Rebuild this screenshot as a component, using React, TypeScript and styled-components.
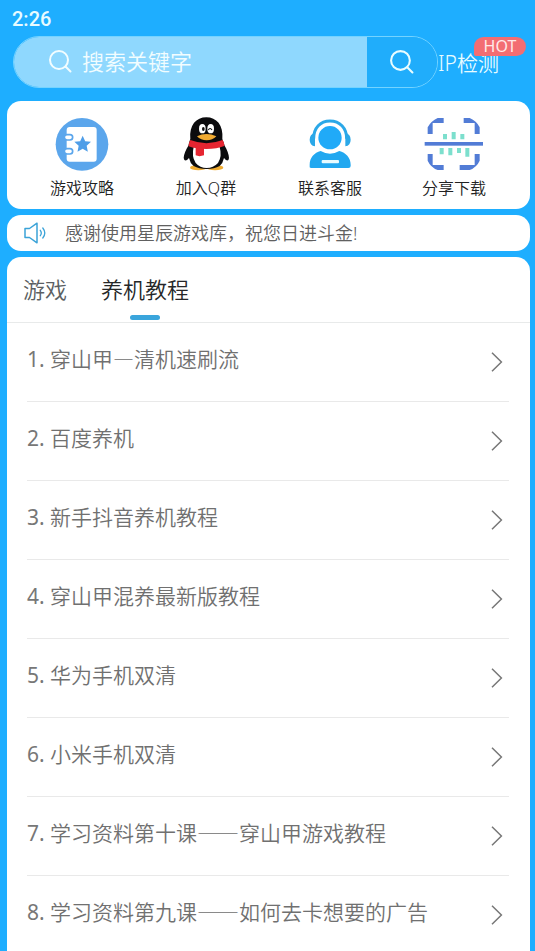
import React, { useState } from 'react';
import styled, { createGlobalStyle } from 'styled-components';

const GlobalStyle = createGlobalStyle`
  * { box-sizing: border-box; }
  body {
    margin: 0;
    background: #1eaeff;
    font-family: "Noto Sans", "Noto Sans CJK SC", sans-serif;
    font-weight: 350;
  }
  button, input { font: inherit; }
  a { color: inherit; text-decoration: none; }
`;

const Page = styled.div`
  display: flex;
  flex-direction: column;
  min-height: 100vh;
`;

const StatusBar = styled.div`
  height: 36px;
  padding: 0 12px;
  font: 500 20px/38px Roboto, sans-serif;
  color: #e8fbff;
`;

const SearchBar = styled.header`
  display: flex;
  height: 52px;
  padding-left: 13px;
`;

const SearchForm = styled.form`
  flex: 1;
  display: flex;
  min-width: 0;
  border: 1px solid #74d3ff;
  border-radius: 26px;
  overflow: hidden;
`;

const SearchField = styled.label`
  flex: 1;
  display: flex;
  align-items: center;
  gap: 10px;
  min-width: 0;
  padding: 0 0 2px 34px;
  background: #8fd8fe;
  color: #f2fdff;
`;

const SearchInput = styled.input`
  flex: 1;
  min-width: 0;
  padding: 0;
  border: 0;
  outline: 0;
  background: transparent;
  font-size: 22px;
  line-height: 32px;
  color: #f2fdff;
  &::placeholder { color: #f2fdff; opacity: 1; }
`;

const SearchButton = styled.button`
  display: flex;
  align-items: center;
  justify-content: center;
  width: 70px;
  padding: 0 2px 2px 0;
  border: 0;
  background: #20adfb;
  color: #e8fcff;
`;

const DetectLink = styled.a`
  position: relative;
  width: 97px;
  font-size: 21px;
  line-height: 54px;
  color: #e8fcff;
  white-space: nowrap;
`;

const HotBadge = styled.span`
  position: absolute;
  top: 1px;
  left: 36px;
  width: 52px;
  border-radius: 10px 10px 10px 2px;
  background: #f36d72;
  font-size: 16px;
  font-weight: 400;
  line-height: 19px;
  text-align: center;
  color: #ffe9e9;
`;

const Main = styled.main`
  flex: 1;
  display: flex;
  flex-direction: column;
  gap: 6px;
  padding: 13px 5px 0 7px;
`;

const Card = styled.section`
  background: #fff;
  border-radius: 14px;
`;

const Shortcuts = styled(Card)`
  display: grid;
  grid-template-columns: repeat(4, 1fr);
  height: 108px;
  padding: 16px 14px 0 13px;
`;

const Shortcut = styled.a`
  display: flex;
  flex-direction: column;
  align-items: center;
  gap: 5px;
  font-size: 16px;
  line-height: 24px;
  color: #222;
`;

const ShortcutIcon = styled.svg`
  width: 60px;
  height: 54px;
`;

const Notice = styled(Card)`
  display: flex;
  align-items: center;
  gap: 18px;
  height: 36px;
  padding: 0 17px;
  font-size: 18px;
  line-height: 36px;
  color: #606060;
`;

const Content = styled(Card)`
  flex: 1;
  border-radius: 14px 14px 0 0;
`;

const Tabs = styled.div`
  display: flex;
  gap: 34px;
  height: 66px;
  padding: 0 16px;
  border-bottom: 1px solid #e8eaea;
`;

const Tab = styled.button<{ $active: boolean }>`
  display: flex;
  flex-direction: column;
  align-items: center;
  gap: 10px;
  padding: 16px 0 0;
  border: 0;
  background: none;
  font-size: 22px;
  line-height: 32px;
  color: ${p => (p.$active ? '#252729' : '#5c5f63')};
  &::after {
    content: "";
    width: 30px;
    height: 5px;
    border-radius: 3px;
    background: ${p => (p.$active ? '#3aa5dc' : 'transparent')};
  }
`;

const List = styled.ol`
  margin: 0;
  padding: 0 21px 0 20px;
  list-style: none;
`;

const Row = styled.li`
  border-bottom: 1px solid #e9e9e9;
  &:last-child { border-bottom: 0; }
`;

const RowLink = styled.a`
  display: flex;
  align-items: center;
  height: 78px;
  padding-right: 6px;
  color: #707070;
`;

const RowNumber = styled.span`
  padding-bottom: 6px;
  font-size: 21px;
  line-height: 32px;
  font-weight: 400;
  white-space: pre;
  color: #777;
`;

const RowTitle = styled.span`
  flex: 1;
  padding-bottom: 8px;
  font-family: "Noto Sans CJK SC", sans-serif;
  font-size: 21px;
  line-height: 32px;
  white-space: nowrap;
`;

const SearchIcon = ({ size }: { size: number }) => (
  <svg width={size} height={size} viewBox="0 0 24 24" fill="none" stroke="currentColor" strokeWidth="2" strokeLinecap="round" aria-hidden="true">
    <circle cx="11" cy="11" r="9" />
    <path d="M17.5 17.5 22.5 22.5" />
  </svg>
);

const Chevron = () => (
  <svg width="12" height="20" viewBox="0 0 12 20" fill="none" stroke="#777" strokeWidth="1.5" aria-hidden="true">
    <path d="M1 .8 10.4 10 1 19.2" />
  </svg>
);

const SpeakerIcon = () => (
  <svg width="23" height="22" viewBox="0 0 23 22" fill="none" stroke="#3ba3d8" strokeWidth="1.5" strokeLinejoin="round" strokeLinecap="round" aria-hidden="true">
    <path d="M1 6.5H5.5L13 1.2V20.8L5.5 15.5H1Z" />
    <path d="M16.3 8.3Q18.3 11 16.3 13.7M18.8 6Q22.8 11 18.8 16" strokeWidth="1.3" />
  </svg>
);

const GuideIcon = () => (
  <ShortcutIcon viewBox="37 36 180 162" aria-hidden="true">
    <circle cx="127" cy="118" r="79" fill="#5ba6ec" />
    <rect x="81" y="66" width="90" height="104" rx="9" fill="#fff" />
    <g fill="#fff" stroke="#5ba6ec" strokeWidth="5">
      <rect x="74" y="89" width="25" height="16" rx="8" />
      <rect x="74" y="131" width="25" height="16" rx="8" />
    </g>
    <path d="M129 92 136.500 108.500 154 110.500 141 122.500 144.500 140 129 131.500 113.500 140 117 122.500 104 110.500 121.500 108.500Z" fill="#4f9ee8" />
  </ShortcutIcon>
);

const PenguinIcon = () => (
  <ShortcutIcon viewBox="31 36 180 162" aria-hidden="true">
    <ellipse cx="98" cy="188" rx="25" ry="8" fill="#f0ac32" />
    <ellipse cx="148" cy="188" rx="25" ry="8" fill="#f0ac32" />
    <path d="M74 102C70 60 92 37 122 37S174 60 170 102Q174 112 177 122C184 134 190 148 190 159Q188 174 175 159Q172 174 162 183Q146 192 123 192T84 183Q73 174 70 159Q57 174 54 159C54 148 61 134 68 122Q70 112 74 102Z" fill="#0b0b0d" />
    <path d="M84 126H162Q170 154 157 174Q143 189 123 189T90 174Q77 154 84 126Z" fill="#fff" />
    <path d="M74 105Q122 124 171 105Q176 113 176 123Q154 132 122 132T69 124Q68 114 74 105Z" fill="#e62531" />
    <path d="M90 126H115V151Q101 156 90 151Z" fill="#e62531" />
    <ellipse cx="110" cy="71" rx="10" ry="14" fill="#fff" />
    <ellipse cx="135" cy="71" rx="10" ry="14" fill="#fff" />
    <ellipse cx="113" cy="72" rx="4" ry="6" fill="#111" />
    <path d="M128 75Q133 66 139 75" fill="none" stroke="#111" strokeWidth="3.500" />
    <path d="M94 94Q122 80 152 94Q141 106 123 106T94 94Z" fill="#f2ab31" />
  </ShortcutIcon>
);

const SupportIcon = () => (
  <ShortcutIcon viewBox="33 36 180 162" aria-hidden="true">
    <path d="M74 101C74 68 94 48 123 48S173 68 173 101" fill="none" stroke="#2ba8e8" strokeWidth="9" />
    <path d="M78 83V124Q62 121 62 104T78 83ZM169 83V124Q185 121 185 104T169 83Z" fill="#2ba8e8" />
    <circle cx="123" cy="98" r="35" fill="#20aaf8" />
    <path d="M62 187V179C62 158 76 143 95 138Q123 154 151 138C170 143 185 158 185 179V183Q185 189 178 189H68Q62 189 62 187Z" fill="#22a8f0" />
    <rect x="98" y="165" width="52" height="10" rx="3" fill="#e8fbff" />
  </ShortcutIcon>
);

const ScanIcon = () => (
  <ShortcutIcon viewBox="43 36 180 162" aria-hidden="true">
    <g fill="#527cd6">
      <path d="M102 39V54H69V87H54V67Q64 48 84 39ZM162 39H180Q201 48 210 67V87H195V54H162ZM54 147H69V180H102V195H84Q63 187 54 167ZM195 147H210V167Q201 187 180 195H150V180H195Z" />
      <rect x="45" y="111" width="175" height="11" />
    </g>
    <path d="M100 87h12v16h-12zM126 81h12v22h-12zM152 87h12v16h-12zM90 129h12v19h-12zM116 129h12v22h-12zM142 129h12v15h-12zM167 129h12v26h-12z" fill="#7cdfcd" />
  </ShortcutIcon>
);

const shortcuts = [
  { label: '游戏攻略', Icon: GuideIcon },
  { label: '加入Q群', Icon: PenguinIcon },
  { label: '联系客服', Icon: SupportIcon },
  { label: '分享下载', Icon: ScanIcon },
];

const tabs = ['游戏', '养机教程'];

const tutorials = [
  '穿山甲—清机速刷流',
  '百度养机',
  '新手抖音养机教程',
  '穿山甲混养最新版教程',
  '华为手机双清',
  '小米手机双清',
  '学习资料第十课——穿山甲游戏教程',
  '学习资料第九课——如何去卡想要的广告',
];

export default function App() {
  const [active, setActive] = useState(1);
  return (
    <Page lang="zh-CN">
      <GlobalStyle />
      <StatusBar>2:26</StatusBar>
      <SearchBar>
        <SearchForm role="search" onSubmit={e => e.preventDefault()}>
          <SearchField>
            <SearchIcon size={24} />
            <SearchInput type="text" placeholder="搜索关键字" aria-label="搜索关键字" />
          </SearchField>
          <SearchButton type="submit" aria-label="搜索">
            <SearchIcon size={25} />
          </SearchButton>
        </SearchForm>
        <DetectLink href="#ip">
          IP检测
          <HotBadge>HOT</HotBadge>
        </DetectLink>
      </SearchBar>
      <Main>
        <Shortcuts>
          {shortcuts.map(({ label, Icon }) => (
            <Shortcut key={label} href="#shortcut">
              <Icon />
              {label}
            </Shortcut>
          ))}
        </Shortcuts>
        <Notice>
          <SpeakerIcon />
          感谢使用星辰游戏库，祝您日进斗金!
        </Notice>
        <Content>
          <Tabs role="tablist">
            {tabs.map((name, i) => (
              <Tab key={name} type="button" role="tab" aria-selected={i === active} $active={i === active} onClick={() => setActive(i)}>
                {name}
              </Tab>
            ))}
          </Tabs>
          <List>
            {tutorials.map((title, i) => (
              <Row key={title}>
                <RowLink href="#tutorial">
                  <RowNumber>{`${i + 1}. `}</RowNumber>
                  <RowTitle>{title}</RowTitle>
                  <Chevron />
                </RowLink>
              </Row>
            ))}
          </List>
        </Content>
      </Main>
    </Page>
  );
}
